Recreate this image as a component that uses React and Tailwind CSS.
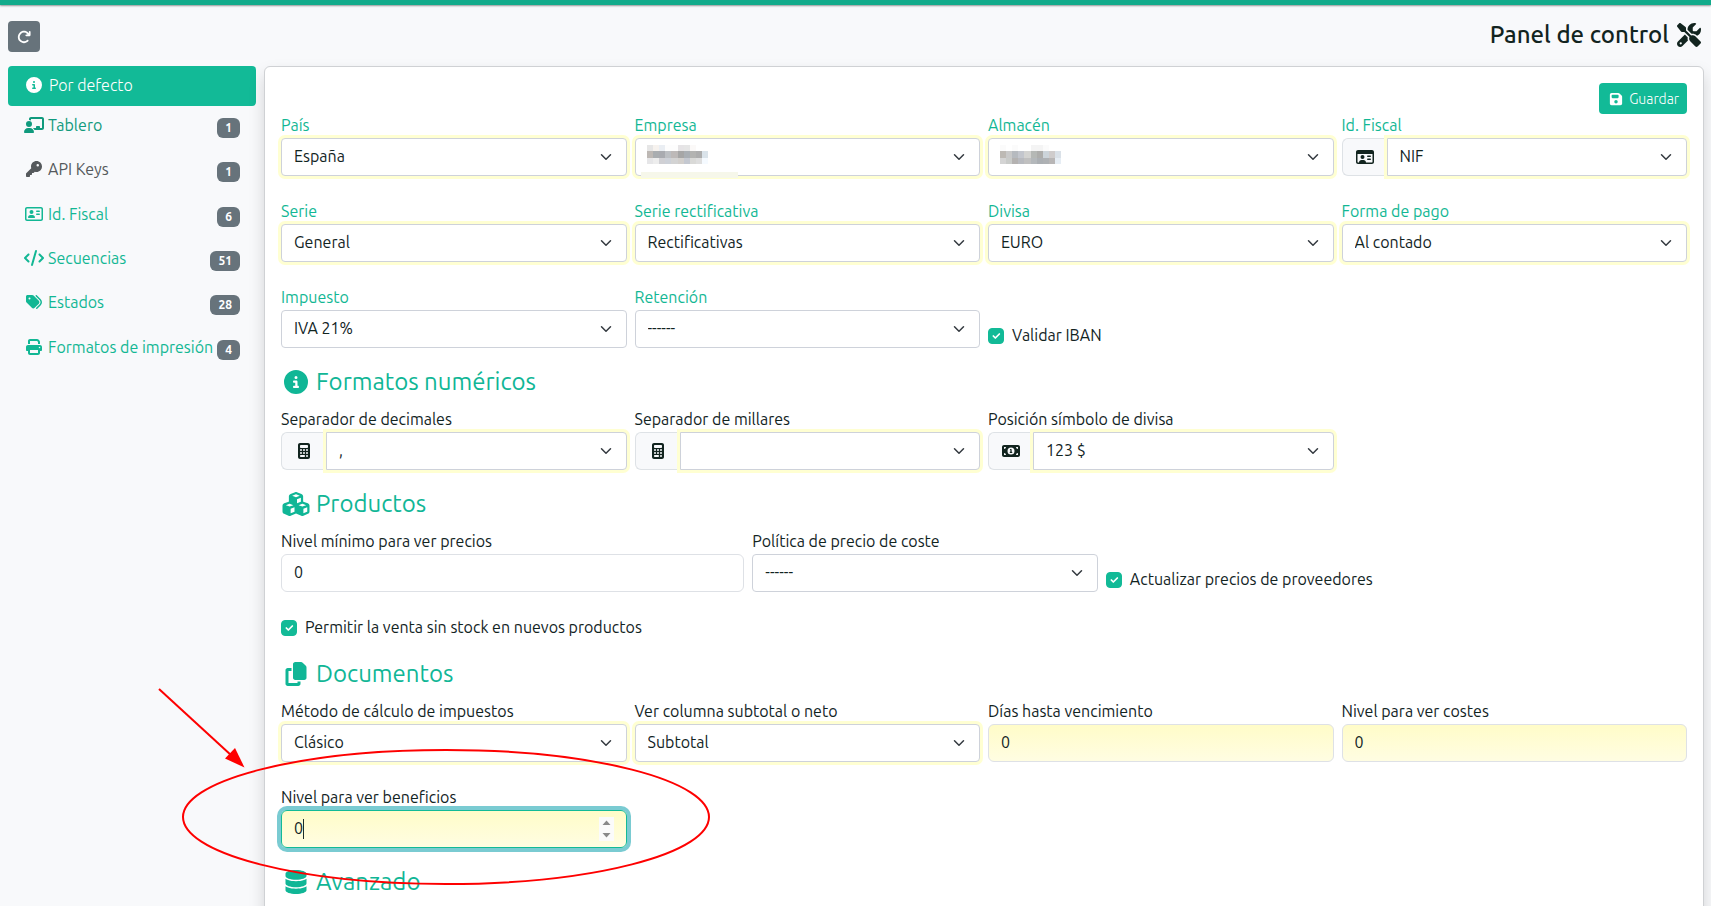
import React, { useId } from 'react';
import {
  FaArrowRotateRight,
  FaCalculator,
  FaChalkboardUser,
  FaCircleInfo,
  FaCode,
  FaCopy,
  FaCubes,
  FaDatabase,
  FaFloppyDisk,
  FaKey,
  FaMoneyBill1,
  FaPrint,
  FaRegAddressCard,
  FaRegIdCard,
  FaScrewdriverWrench,
  FaTags,
} from 'react-icons/fa6';

const NAV = [
  { icon: FaChalkboardUser, label: 'Tablero', count: 1, tone: 'text-[#109a7d]' },
  { icon: FaKey, label: 'API Keys', count: 1, tone: 'text-[#55595c]' },
  { icon: FaRegAddressCard, label: 'Id. Fiscal', count: 6, tone: 'text-[#12b794]' },
  { icon: FaCode, label: 'Secuencias', count: 51, tone: 'text-[#12b794]' },
  { icon: FaTags, label: 'Estados', count: 28, tone: 'text-[#12b794]' },
  { icon: FaPrint, label: 'Formatos de impresión', count: 4, tone: 'text-[#12b794]' },
];

const MOSAIC_A = [
  ['#e6e6e6', '#f6f2ee', '#eaeef3', '#fdfdfd', '#fdfdfd', '#e6e4e6', '#e6e6e6', '#fbf9f8', '#ffffff', '#ffffff'],
  ['#bdb8b4', '#a9adb0', '#a9abb0', '#bcbfc3', '#bdb9b8', '#a6a6a6', '#a9aeb3', '#b3b3b1', '#adadad', '#dae3ea'],
  ['#e6e6e8', '#ededed', '#d0d0d4', '#cdd1d8', '#d3d3d3', '#d2cfcc', '#c4c8d0', '#d9d9d7', '#dedede', '#f5faff'],
];
const MOSAIC_B = [
  ['#fbfbfb', '#ffffff', '#fbfbfb', '#ffffff', '#ffffff', '#f4f4f4', '#f4f4f4', '#fbfbfb', '#ffffff', '#ffffff'],
  ['#bdb9b4', '#c9c9c9', '#b6babf', '#c3c6cd', '#d3d3d1', '#b5b8b5', '#adadab', '#ccd4da', '#cfcccc', '#dae1e8'],
  ['#d4d4d4', '#c9cbc9', '#b4b2b1', '#b8babf', '#c0c0c0', '#b4b8bb', '#abafb3', '#aeb1b4', '#b8b6b6', '#e6edf4'],
];

function Mosaic({ rows }) {
  return (
    <svg
      className="pointer-events-none absolute left-3 top-[7px] h-[19px] w-[61px]"
      viewBox="0 0 10 3"
      preserveAspectRatio="none"
      shapeRendering="crispEdges"
      aria-hidden="true"
    >
      {rows.map((row, y) => row.map((fill, x) => <rect key={`${x}-${y}`} x={x} y={y} width="1" height="1" fill={fill} />))}
    </svg>
  );
}

function Label({ id, green, children }) {
  return (
    <label htmlFor={id} className={`block pb-0.5 leading-[22px] ${green ? 'text-[#12b794]' : ''}`}>
      {children}
    </label>
  );
}

function SelectField({ label, value, green, ring = true, icon: Icon, mosaic, strip, className = 'col-span-3' }) {
  const id = useId();
  return (
    <div className={className}>
      <Label id={id} green={green}>{label}</Label>
      <div className="flex">
        {Icon && (
          <span className="flex w-[45px] shrink-0 items-center justify-center rounded-l-md border border-r-0 border-[#dee2e6] bg-[#f8f9fb]">
            <Icon className="h-4 w-[18px]" />
          </span>
        )}
        <div className="relative min-w-0 flex-1">
          <select
            id={id}
            defaultValue={value}
            className={`block h-[38px] w-full appearance-none border border-[#ced2da] bg-white pb-0.5 pl-3 pr-9 ${
              Icon ? 'rounded-r' : 'rounded'
            } ${ring ? 'shadow-[0_0_0_3px_#ffffd2]' : ''}`}
          >
            <option>{value}</option>
          </select>
          {mosaic && <Mosaic rows={mosaic} />}
          {strip && <span className="absolute -bottom-0.5 left-1.5 h-1.5 w-[97px] bg-[#f6f7ea]" />}
          <svg className="pointer-events-none absolute right-[13px] top-[13px] h-3 w-4" viewBox="0 0 16 16" fill="none" aria-hidden="true">
            <path d="m2 5 6 6 6-6" stroke="#343a40" strokeWidth="2" strokeLinecap="round" strokeLinejoin="round" />
          </svg>
        </div>
      </div>
    </div>
  );
}

function NumberField({ label, yellow, focused, className = 'col-span-3' }) {
  const id = useId();
  return (
    <div className={className}>
      <Label id={id}>{label}</Label>
      <div className="relative">
        <input
          id={id}
          type="number"
          defaultValue="0"
          className={`block h-[38px] w-full rounded-md border px-3 pb-0.5 outline-none [appearance:textfield] ${
            yellow ? 'bg-linear-to-b from-[#fffcc8] to-[#fffde2]' : 'bg-white'
          } ${focused ? 'border-[#12ba97] shadow-[0_0_0_4px_#7acbd2]' : 'border-[#dee1e6]'}`}
        />
        {focused && (
          <>
            <span className="absolute left-[22px] top-[9px] h-5 w-px bg-[#1b2d2a]" />
            <svg className="pointer-events-none absolute right-[13px] top-[7px] h-6 w-[15px]" viewBox="0 0 15 24" aria-hidden="true">
              <rect width="15" height="24" fill="#fbfbfb" />
              <path d="M3.5 8 7.5 3.5 11.5 8zM3.5 16 7.5 20.5 11.5 16z" fill="#8a8a8a" />
            </svg>
          </>
        )}
      </div>
    </div>
  );
}

function CheckField({ label, className = 'col-span-3' }) {
  return (
    <label className={`flex items-center gap-2 self-end pb-0.5 leading-[22px] ${className}`}>
      <span className="relative mt-0.5 size-4">
        <input type="checkbox" defaultChecked className="block size-4 appearance-none rounded border border-[#12ba97] bg-[#12ba97]" />
        <svg className="pointer-events-none absolute inset-0 size-4" viewBox="-2 -2 24 24" fill="none" aria-hidden="true">
          <path d="m6 10 3 3 6-6" stroke="#fff" strokeWidth="2.6" strokeLinecap="round" strokeLinejoin="round" />
        </svg>
      </span>
      {label}
    </label>
  );
}

function Section({ icon: Icon, children }) {
  return (
    <h2 className="mb-3 mt-5 flex items-center gap-[5px] text-2xl leading-7 text-[#10b696]">
      <Icon className="h-6 w-[30px]" />
      {children}
    </h2>
  );
}

const ROW = 'grid grid-cols-12 gap-x-2 gap-y-6';

export default function App() {
  return (
    <div className="h-screen overflow-x-hidden overflow-y-auto bg-[#f8f9fb] font-['Ubuntu','Noto_Sans',sans-serif] text-base text-[#12241f] [scrollbar-width:none]">
      <div className="relative">
        <div className="h-[5px] bg-[#12ab8b] shadow-[0_1px_2px_rgba(0,0,0,0.4)]" />
        <header className="flex items-start justify-between pb-3.5 pl-2 pr-[7px] pt-4">
          <button type="button" aria-label="Recargar" className="flex h-[31px] w-8 items-center justify-center rounded bg-[#67737b] text-white">
            <FaArrowRotateRight className="size-3.5" />
          </button>
          <h1 className="flex items-center gap-[5px] text-2xl font-medium leading-7">
            Panel de control
            <FaScrewdriverWrench className="h-6 w-[30px]" />
          </h1>
        </header>

        <div className="flex items-start gap-2 pl-2 pr-[7px]">
          <nav className="w-[248px] shrink-0">
            <a href="#defecto" className="flex h-10 items-center gap-[5px] rounded bg-[#12ba97] px-4 pb-0.5 font-light text-white">
              <FaCircleInfo className="h-4 w-5" />
              Por defecto
            </a>
            <div className="grid min-h-[266px] auto-rows-fr">
              {NAV.map(({ icon: Icon, label, count, tone }) => (
                <a key={label} href={`#${label}`} className={`flex items-start justify-between px-4 pt-2 ${tone}`}>
                  <span className="flex items-center gap-1 whitespace-nowrap leading-[22px]">
                    <Icon className="h-4 w-5" />
                    {label}
                  </span>
                  <span className="mt-1 rounded-md bg-[#67737b] px-2 text-xs font-bold leading-5 text-white">{count}</span>
                </a>
              ))}
            </div>
          </nav>

          <main className="min-w-0 flex-1 rounded-md border border-[#cfd1d4] bg-white p-4 shadow-[0_8px_16px_rgba(0,0,0,0.15)]">
            <form>
              <div className="flex justify-end">
                <button type="button" className="flex h-[31px] items-center gap-1 rounded bg-[#12ba97] px-2 text-sm font-light text-white">
                  <FaFloppyDisk className="h-3.5 w-[18px]" />
                  Guardar
                </button>
              </div>

              <div className={ROW}>
                <SelectField green label="País" value="España" />
                <SelectField green strip label="Empresa" value="" mosaic={MOSAIC_A} />
                <SelectField green label="Almacén" value="" mosaic={MOSAIC_B} />
                <SelectField green label="Id. Fiscal" value="NIF" icon={FaRegIdCard} />
                <SelectField green label="Serie" value="General" />
                <SelectField green label="Serie rectificativa" value="Rectificativas" />
                <SelectField green label="Divisa" value="EURO" />
                <SelectField green label="Forma de pago" value="Al contado" />
                <SelectField green ring={false} label="Impuesto" value="IVA 21%" />
                <SelectField green ring={false} label="Retención" value="------" />
                <CheckField label="Validar IBAN" />
              </div>

              <Section icon={FaCircleInfo}>Formatos numéricos</Section>
              <div className={ROW}>
                <SelectField label="Separador de decimales" value="," icon={FaCalculator} />
                <SelectField label="Separador de millares" value="" icon={FaCalculator} />
                <SelectField label="Posición símbolo de divisa" value="123 $" icon={FaMoneyBill1} />
              </div>

              <Section icon={FaCubes}>Productos</Section>
              <div className={ROW}>
                <NumberField label="Nivel mínimo para ver precios" className="col-span-4" />
                <SelectField ring={false} label="Política de precio de coste" value="------" />
                <CheckField label="Actualizar precios de proveedores" className="col-span-5" />
                <CheckField label="Permitir la venta sin stock en nuevos productos" className="col-span-12" />
              </div>

              <Section icon={FaCopy}>Documentos</Section>
              <div className={ROW}>
                <SelectField label="Método de cálculo de impuestos" value="Clásico" />
                <SelectField label="Ver columna subtotal o neto" value="Subtotal" />
                <NumberField yellow label="Días hasta vencimiento" />
                <NumberField yellow label="Nivel para ver costes" />
                <NumberField yellow focused label="Nivel para ver beneficios" />
              </div>

              <Section icon={FaDatabase}>Avanzado</Section>
            </form>
          </main>
        </div>

        <svg className="pointer-events-none absolute left-0 top-0 h-[906px] w-[720px]" viewBox="0 0 720 906" fill="none" aria-hidden="true">
          <ellipse cx="446" cy="817" rx="263" ry="67" stroke="#fe0000" strokeWidth="2" />
          <path d="M159 689 232 756" stroke="#fe0000" strokeWidth="2" />
          <path d="M244.5 767.5 235 748 225 758.5z" fill="#fe0000" />
        </svg>
      </div>
    </div>
  );
}
